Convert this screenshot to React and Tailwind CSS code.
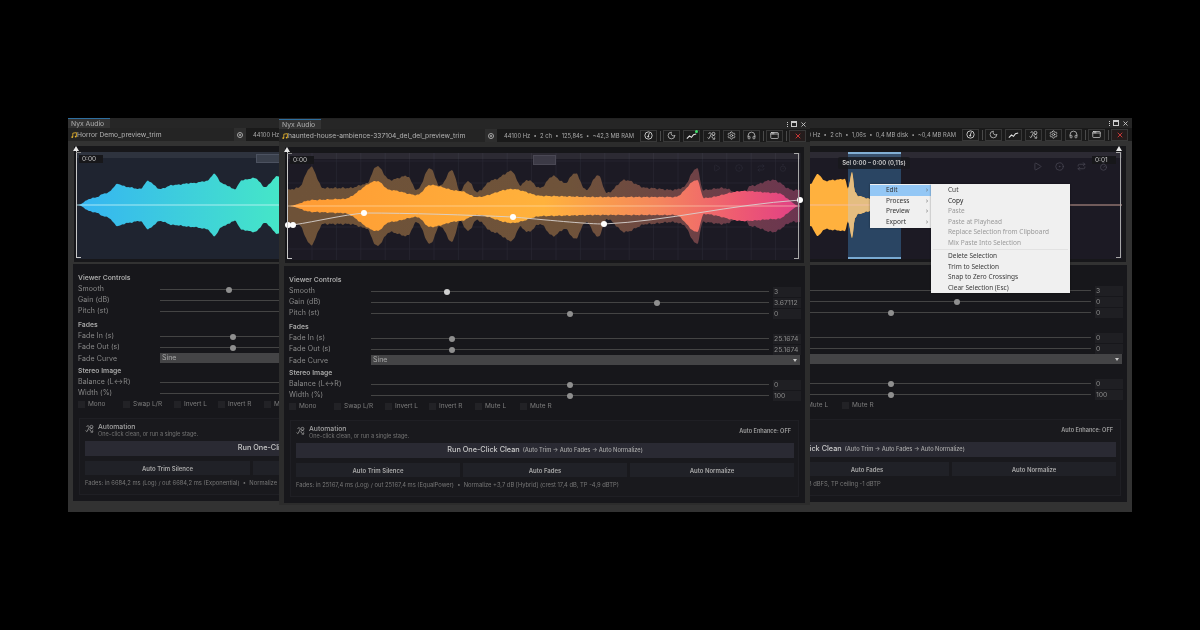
import React from "react";
import { Moon, Settings, Headphones, AppWindow, X, Play, CircleDot, Repeat, Timer } from "lucide-react";

const W = 512, H = 107, CY = 53;

function interp(pts, x) {
  if (x <= pts[0][0]) return pts[0][1];
  for (let i = 1; i < pts.length; i++) {
    if (x <= pts[i][0]) {
      const [a, b] = [pts[i - 1], pts[i]];
      const t = (x - a[0]) / (b[0] - a[0] || 1);
      const s = t * t * (3 - 2 * t);
      return a[1] + (b[1] - a[1]) * s;
    }
  }
  return pts[pts.length - 1][1];
}
function envPath(pts, jitter = 0.4) {
  const up = [], down = [];
  for (let x = 0; x <= W; x += 1) {
    let a = interp(pts, x);
    if (a > 3) a += (Math.sin(x * 0.83) + Math.sin(x * 1.61 + 1)) * jitter;
    up.push(`${x},${(CY - a).toFixed(1)}`);
    down.unshift(`${x},${(CY + a).toFixed(1)}`);
  }
  return `M${up.join("L")}L${down.join("L")}Z`;
}

const leftEnv = [[0,0],[16,7],[30,12],[41,21],[50,18],[63,16],[71,24],[83,16],[96,20],[116,22],[130,24],[137,31],[146,21],[158,16],[165,25],[178,27],[188,18],[201,29],[230,22],[300,26],[400,20],[512,0]];
const midOuter = [[0,16],[10,18],[23,39],[35,18],[62,18],[78,22],[89,40],[102,26],[119,30],[129,16],[142,38],[152,20],[164,36],[172,15],[180,25],[189,14],[205,26],[224,35],[232,21],[240,26],[252,18],[265,30],[277,23],[287,33],[298,16],[310,31],[319,13],[337,26],[359,18],[386,16],[394,18],[409,38],[415,16],[435,18],[455,11],[462,20],[485,26],[505,16],[512,16]];
const midInner = [[0,0],[25,6],[55,7],[89,25],[102,16],[129,11],[142,21],[172,15],[189,9],[224,17],[255,10],[310,9],[387,9],[409,26],[416,8],[455,15],[489,13],[512,0]];
const rightEnv = [[0,24],[200,21],[208,31],[215,24],[223,25],[235,26],[238,16],[242,33],[245,13],[248,9],[260,6],[290,2],[320,0],[512,0]];

function WaveLeft() {
  return (
    <svg viewBox={`0 0 ${W} ${H}`} className="w-full h-full block overflow-visible">
      <defs>
        <linearGradient id="lg" gradientUnits="userSpaceOnUse" x1="0" x2="202" y1="0" y2="0">
          <stop offset="0" stopColor="#35b4f2" />
          <stop offset="1" stopColor="#45e6c8" />
        </linearGradient>
      </defs>
      <path d={envPath(leftEnv, 0.3)} fill="url(#lg)" />
      <line x1="0" x2={W} y1={CY} y2={CY} stroke="#c8f4f6" strokeWidth="0.8" />
    </svg>
  );
}
function WaveMid() {
  const vs = [], hs = [];
  for (let x = 24; x < W; x += 24.4) vs.push(x);
  for (let y = 8; y < H; y += 22) hs.push(y);
  return (
    <svg viewBox={`0 0 ${W} ${H}`} className="w-full h-full block overflow-visible">
      <defs>
        <linearGradient id="mi" gradientUnits="userSpaceOnUse" x1="0" x2={W} y1="0" y2="0">
          <stop offset="0" stopColor="#ff9a33" />
          <stop offset="0.5" stopColor="#ffb23c" />
          <stop offset="0.72" stopColor="#f5875c" />
          <stop offset="0.88" stopColor="#ee5a72" />
          <stop offset="1" stopColor="#e03f86" />
        </linearGradient>
        <linearGradient id="mo" gradientUnits="userSpaceOnUse" x1="0" x2={W} y1="0" y2="0">
          <stop offset="0" stopColor="#6e5238" />
          <stop offset="0.55" stopColor="#6f533a" />
          <stop offset="0.8" stopColor="#6e4146" />
          <stop offset="1" stopColor="#6c3550" />
        </linearGradient>
      </defs>
      {vs.map((x) => <line key={x} x1={x} x2={x} y1="0" y2={H} stroke="#2a2834" strokeWidth="0.7" />)}
      {hs.map((y) => <line key={y} x1="0" x2={W} y1={y} y2={y} stroke="#2a2834" strokeWidth="0.7" />)}
      <path d={envPath(midOuter, 0.5)} fill="url(#mo)" />
      <path d={envPath(midInner, 0.3)} fill="url(#mi)" />
      <line x1="0" x2={W} y1={CY} y2={CY} stroke="#ffe9c8" strokeOpacity="0.75" strokeWidth="0.7" />
      <path d="M5 72 C30 68 55 62 76 60 C120 60 180 62 225 64 C270 68 300 71 316 71 C380 68 440 52 512 47" fill="none" stroke="#d8d2d0" strokeWidth="0.9" />
      {[[0,72],[5,72],[76,60],[225,64],[316,71],[512,47]].map(([x,y]) => (
        <circle key={x} cx={x} cy={y} r="3" fill="#fff" />
      ))}
    </svg>
  );
}
function WaveRight() {
  const d = envPath(rightEnv, 0.3);
  return (
    <svg viewBox={`0 0 ${W} ${H}`} className="w-full h-full block overflow-visible">
      <defs>
        <clipPath id="rs"><rect x="238" y="0" width="53" height={H} /></clipPath>
      </defs>
      <rect x="238" y="0" width="53" height={H} fill="#2a4563" />
      <path d={d} fill="#ffb13e" />
      <path d={d} fill="#e4bd80" clipPath="url(#rs)" />
      <rect x="238" y="0" width="53" height="2" fill="#79aad2" />
      <rect x="238" y={H - 2} width="53" height="2" fill="#79aad2" />
      <line x1="0" x2={W} y1={CY} y2={CY} stroke="#f4c0b0" strokeWidth="0.8" />
    </svg>
  );
}

function Note() {
  return (
    <svg viewBox="0 0 10 10" className="w-[6px] h-[6px] shrink-0">
      <path d="M3 2 L9 1 V7.5 M3 2 V8.5" fill="none" stroke="#e8b52e" strokeWidth="1.4" />
      <circle cx="2" cy="8.5" r="1.5" fill="#e8b52e" />
      <circle cx="7.8" cy="7.6" r="1.5" fill="#e8b52e" />
    </svg>
  );
}
function Squiggle({ cls }) {
  return (
    <svg viewBox="0 0 16 16" className={cls} fill="none" stroke="currentColor" strokeWidth="1.3">
      <path d="M3 5 a2.2 2.2 0 1 1 4 1.6 L4 13 a1.6 1.6 0 0 1 -2.6 -1.4" />
      <circle cx="11.5" cy="5" r="2.6" />
      <path d="M14 9.5 a2.6 2.6 0 1 0 -.3 2.4 V14 a2 2 0 0 1 -3.6 .8" />
    </svg>
  );
}
function Trend() {
  return (
    <svg viewBox="0 0 16 12" className="w-[11px] h-[8px]" fill="none" stroke="#e0e0e0" strokeWidth="1.6">
      <path d="M1 10 L5 6 L8 8 L11 4 L15 3" />
    </svg>
  );
}
function Dial() {
  return (
    <svg viewBox="0 0 16 16" className="w-[9px] h-[9px]" fill="none" stroke="#dcdcdc" strokeWidth="1.5">
      <circle cx="8" cy="8" r="6.5" />
      <path d="M9.5 3.5 L7.5 9.5" />
      <circle cx="7.5" cy="10" r="1" fill="#dcdcdc" />
    </svg>
  );
}

function Btn({ children, dot, red }) {
  return (
    <div className={`relative w-[17px] h-[12px] border border-[#383838] flex items-center justify-center shrink-0 ${red ? "bg-[#241c1c]" : "bg-[#1c1c1c]"}`}>
      {children}
      {dot && <div className="absolute -top-[1px] right-[1px] w-[3px] h-[3px] rounded-full bg-[#3fe06a]" />}
    </div>
  );
}
const Div = () => <div className="w-px h-[10px] bg-[#4a4a4a] -mx-[0.5px] shrink-0" />;

function Toolbar({ file, fileW, stats, dot, statsEnd }) {
  const ic = "w-[9px] h-[9px] text-[#dcdcdc]";
  return (
    <div className="h-[13px] bg-[#1a1a1a] flex items-center shrink-0 pr-[4px]">
      <div className="flex items-center h-full bg-[#242424] pl-[3px] shrink-0 overflow-hidden" style={{ width: fileW + 3 }}>
        <Note />
        <span className="text-[6.7px] pt-px text-[#b4b4b4] whitespace-nowrap">{file}</span>
      </div>
      <div className="w-[12px] h-[13px] bg-[#2e2e2e] flex items-center justify-center shrink-0">
        <div className="w-[6px] h-[6px] rounded-full border border-[#a8a8a8] flex items-center justify-center">
          <div className="w-[2px] h-[2px] rounded-full bg-[#a8a8a8]" />
        </div>
      </div>
      <div className={`flex-1 min-w-0 flex overflow-hidden ${statsEnd ? "justify-end pr-[6px]" : "pl-[7px]"}`}>
        <span className="text-[5.8px] pt-px text-[#a9a9a9] whitespace-pre">{stats}</span>
      </div>
      <div className="flex items-center gap-[3px] shrink-0">
        <Btn><Dial /></Btn>
        <Div />
        <Btn><Moon className={ic} strokeWidth={1.8} /></Btn>
        <Btn dot={dot}><Trend /></Btn>
        <Btn><Squiggle cls="w-[9px] h-[9px] text-[#dcdcdc]" /></Btn>
        <Btn><Settings className={ic} strokeWidth={1.8} /></Btn>
        <Btn><Headphones className={ic} strokeWidth={1.8} /></Btn>
        <Div />
        <Btn><AppWindow className={ic} strokeWidth={1.8} /></Btn>
        <Div />
        <Btn red><X className="w-[8px] h-[8px] text-[#e03a3a]" strokeWidth={2.6} /></Btn>
      </div>
    </div>
  );
}

function Slider({ label, pos, value, thumb = "bg-[#8f8f8f]" }) {
  return (
    <div className="h-[11px] flex items-center">
      <div className="w-[82px] shrink-0 text-[7px] tracking-[0.1px] text-[#8a8a8a] whitespace-nowrap">{label}</div>
      <div className="relative w-[398px] h-[1.5px] bg-[#444] shrink-0">
        {pos != null && (
          <div className={`absolute top-1/2 w-[6px] h-[6px] rounded-full -translate-x-1/2 -translate-y-1/2 ${thumb}`} style={{ left: `${pos}%` }} />
        )}
      </div>
      <div className="ml-[4px] w-[28px] h-[10px] bg-[#1f1f23] text-[6.8px] text-[#8a8a8a] leading-[10px] pl-[1px] shrink-0">{value}</div>
    </div>
  );
}
const Head = ({ children, cls = "" }) => (
  <div className={`h-[11px] flex items-center text-[6.8px] font-semibold text-[#a6a6a6] ${cls}`}>{children}</div>
);

const checks = [["Mono", 45], ["Swap L/R", 51], ["Invert L", 44], ["Invert R", 46], ["Mute L", 45], ["Mute R", 50]];

function Controls({ v, thumbWhite, status, up }) {
  return (
    <div className={`mx-[5px] h-[237px] bg-[#17171b] px-[5px] pt-[9px] shrink-0 ${up ? "mt-[2px]" : "mt-[3px]"}`}>
      <Head>Viewer Controls</Head>
      <Slider label="Smooth" pos={v.smooth} value="3" thumb={thumbWhite ? "bg-[#cfcfcf]" : undefined} />
      <Slider label="Gain (dB)" pos={v.gain} value={v.gainV} />
      <Slider label="Pitch (st)" pos={v.pitch} value="0" />
      <Head cls="mt-[3px]">Fades</Head>
      <Slider label="Fade In (s)" pos={v.fade} value={v.fadeV} />
      <Slider label="Fade Out (s)" pos={v.fade} value={v.fadeV} />
      <div className="h-[11px] flex items-start">
        <div className="w-[82px] shrink-0 text-[7px] leading-[11px] tracking-[0.1px] text-[#8a8a8a]">Fade Curve</div>
        <div className="flex-1 h-[10px] bg-[#444446] text-[7px] leading-[10px] text-[#a8a8a8] pl-[2px] flex justify-between items-center pr-[3px]">
          <span>Sine</span>
          <span className="w-0 h-0 border-x-[2.5px] border-x-transparent border-t-[3px] border-t-[#c8c8c8]" />
        </div>
      </div>
      <Head cls="mt-[2px]">Stereo Image</Head>
      <Slider label="Balance (L↔R)" pos={v.bal} value="0" />
      <Slider label="Width (%)" pos={v.bal} value="100" />
      <div className="h-[11px] flex items-center">
        {checks.map(([t, w]) => (
          <div key={t} className="flex items-center gap-[3px] shrink-0" style={{ width: w }}>
            <div className="w-[7px] h-[7px] bg-[#222226]" />
            <span className="text-[6.5px] text-[#7d7d7d] whitespace-nowrap">{t}</span>
          </div>
        ))}
      </div>
      <div className="mt-[8px] ml-[1px] mr-[1px] h-[77px] bg-[#19191d] border border-[#1f1f24] pl-[5px] pr-[4px]">
        <div className="h-[22px] flex items-start pt-[4px]">
          <Squiggle cls="w-[9px] h-[9px] text-[#a8a8a8] mr-[4px] mt-[1px]" />
          <div className="flex flex-col">
            <span className="text-[6.8px] leading-[8px] text-[#a5a5a5] font-medium">Automation</span>
            <span className="text-[5.6px] leading-[7px] text-[#747474]">One-click clean, or run a single stage.</span>
          </div>
          <span className="ml-auto mr-[3px] mt-[2px] text-[5.6px] font-semibold text-[#a0a0a0]">Auto Enhance: OFF</span>
        </div>
        <div className="h-[15px] bg-[#2a2a33] flex items-center justify-center gap-[3px]">
          <span className="text-[7.3px] font-medium text-[#c8c8c8]">Run One-Click Clean</span>
          <span className="text-[5.7px] font-medium text-[#a8a8a8]">(Auto Trim → Auto Fades → Auto Normalize)</span>
        </div>
        <div className="mt-[5px] h-[14px] grid grid-cols-3 gap-[3px]">
          {["Auto Trim Silence", "Auto Fades", "Auto Normalize"].map((t) => (
            <div key={t} className="bg-[#202127] flex items-center justify-center text-[6px] font-semibold text-[#a8a8a8]">{t}</div>
          ))}
        </div>
        <div className="mt-[4px] h-[8px] text-[5.8px] leading-[8px] text-[#777] whitespace-pre overflow-hidden">{status}</div>
      </div>
    </div>
  );
}

function Brackets({ left, right }) {
  return (
    <>
      {left && (
        <>
          <div className="absolute -left-[1px] -top-[3px] bottom-[1px] w-[1px] bg-[#c8c8c8]" />
          <div className="absolute -left-[1px] bottom-[1px] w-[5px] h-px bg-[#c8c8c8]" />
          <div className="absolute -left-[1px] top-0 w-[5px] h-px bg-[#8a8a8a]" />
          <div className="absolute -left-[4px] -top-[6px] w-0 h-0 border-x-[3px] border-x-transparent border-b-[5px] border-b-[#e8e8e8]" />
        </>
      )}
      {right && (
        <>
          <div className="absolute right-[1px] top-0 bottom-[1px] w-[1px] bg-[#a8a8a8]" />
          <div className="absolute right-[1px] bottom-[1px] w-[5px] h-px bg-[#a8a8a8]" />
          <div className="absolute right-[1px] top-0 w-[5px] h-px bg-[#a8a8a8]" />
        </>
      )}
    </>
  );
}

function Win({ cls, h, file, fileW, stats, dot, statsEnd, bg, wave, overlay, ctrl, thumbWhite, status, up }) {
  return (
    <div className={`absolute flex flex-col overflow-hidden ${cls}`} style={{ height: h }}>
      <div className="h-[10px] bg-[#262626] flex items-stretch shrink-0">
        <div className="w-[42px] bg-[#333] border-t border-t-[#2f6f9f] text-[6.8px] leading-[9px] pl-[3px] text-[#b0b0b0]">Nyx Audio</div>
        <div className="ml-auto flex items-center gap-[3px] pr-[3px]">
          <div className="flex flex-col gap-[1px]">
            <div className="w-[1px] h-[1px] bg-[#ccc]" /><div className="w-[1px] h-[1px] bg-[#ccc]" /><div className="w-[1px] h-[1px] bg-[#ccc]" />
          </div>
          <div className="w-[6px] h-[6px] border border-[#ccc] border-t-2" />
          <X className="w-[7px] h-[7px] text-[#ccc]" strokeWidth={3} />
        </div>
      </div>
      <Toolbar file={file} fileW={fileW} stats={stats} dot={dot} statsEnd={statsEnd} />
      <div className="mt-[5px] ml-[6px] mr-[6px] h-[116px] bg-[#17171a] pt-[6px] pl-[3px] shrink-0">
        <div className={`relative w-[512px] h-[107px] ${bg}`}>
          <div className="absolute top-0 left-0 right-0 h-[6px] bg-[#ffffff12]" />
          {wave}
          {overlay}
        </div>
      </div>
      <Controls v={ctrl} thumbWhite={thumbWhite} status={status} up={up} />
    </div>
  );
}

const Chip = ({ t, cls }) => (
  <div className={`absolute top-[3px] h-[8px] w-[24px] bg-[#17171a] text-[6.5px] leading-[8px] text-[#c4c4c4] pl-[3px] ${cls}`}>{t}</div>
);

function Menu() {
  const Row = ({ t, dim, dark }) => (
    <div className={`h-[10.5px] leading-[10.5px] pl-[17px] whitespace-nowrap ${dim ? "text-[#9a9a9a]" : dark ? "text-[#222]" : "text-[#3a3a3a]"}`}>{t}</div>
  );
  const Main = ({ t, on }) => (
    <div className={`h-[10.5px] leading-[10.5px] pl-[16px] pr-[3px] flex justify-between text-[#333] ${on ? "bg-[#93c7f5]" : ""}`}>
      <span>{t}</span><span className="text-[#666]">›</span>
    </div>
  );
  return (
    <div className="absolute left-[870px] top-[184px] z-30 flex items-start font-['Noto_Sans',sans-serif] text-[6.5px]">
      <div className="w-[61px] bg-[#f0f0f0] py-[1px] shadow-[0_0_2px_#0006]">
        <Main t="Edit" on /><Main t="Process" /><Main t="Preview" /><Main t="Export" />
      </div>
      <div className="w-[139px] h-[109px] bg-[#f0f0f0] pt-[1px] shadow-[0_0_2px_#0006]">
        <Row t="Cut" /><Row t="Copy" dark /><Row t="Paste" dim /><Row t="Paste at Playhead" dim />
        <Row t="Replace Selection from Clipboard" dim /><Row t="Mix Paste Into Selection" dim />
        <div className="h-px bg-[#e2e2e2] my-[1px] mx-[2px]" />
        <Row t="Delete Selection" /><Row t="Trim to Selection" /><Row t="Snap to Zero Crossings" /><Row t="Clear Selection (Esc)" />
      </div>
    </div>
  );
}

export default function App() {
  const ovLeft = (
    <>
      <Brackets left />
      <Chip t="0:00" cls="left-[2px]" />
      <div className="absolute left-[179px] top-[2px] w-[24px] h-[9px] border border-[#4c5260] bg-[#3a404c]" />
    </>
  );
  const ovMid = (
    <>
      <Brackets left right />
      <Chip t="0:00" cls="left-[2px]" />
      <div className="absolute left-[245px] top-[2px] w-[23px] h-[10px] border border-[#4a4854] bg-[#3c3a46]" />
      <div className="absolute right-[13px] top-[11px] flex gap-[14px] text-[#2c2a36]">
        <Play className="w-[8px] h-[8px]" /><CircleDot className="w-[8px] h-[8px]" /><Repeat className="w-[8px] h-[8px]" /><Timer className="w-[8px] h-[8px]" />
      </div>
    </>
  );
  const ovRight = (
    <>
      <div className="absolute right-[0px] -top-[6px] w-0 h-0 border-x-[3px] border-x-transparent border-b-[5px] border-b-[#e8e8e8]" />
      <Brackets right />
      <div className="absolute left-[228px] top-[5px] h-[12px] w-[72px] rounded-[2px] bg-[#18181ccc] text-[6px] font-semibold leading-[12px] text-center text-[#c8c8c8] whitespace-nowrap">Sel 0:00 – 0:00 (0,11s)</div>
      <Chip t="0:01" cls="right-[6px] !top-[4px]" />
      <div className="absolute right-[14px] top-[10px] flex gap-[13px] text-[#4a4854]">
        <Play className="w-[9px] h-[9px]" /><CircleDot className="w-[9px] h-[9px]" /><Repeat className="w-[9px] h-[9px]" /><Timer className="w-[9px] h-[9px]" />
      </div>
    </>
  );
  return (
    <div className="relative w-[1200px] h-[630px] bg-black overflow-hidden font-['Inter',sans-serif] blur-[0.4px]">
      <Win
        cls="left-[68px] top-[118px] w-[534px] bg-[#323232] z-0"
        h={394}
        up
        file="Horror Demo_preview_trim"
        fileW={163}
        stats="44100 Hz  •  2 ch  •  33,42s  •  ~11,2 MB RAM"
        bg="bg-[#1f2430]"
        wave={<WaveLeft />}
        overlay={ovLeft}
        ctrl={{ smooth: 17.3, gain: 50, gainV: "0", pitch: 50, fade: 18.3, fadeV: "6.6842", bal: 50 }}
        status="Fades: in 6684,2 ms (Log) / out 6684,2 ms (Exponential)  •  Normalize +2,1 dB [Hybrid]"
      />
      <Win
        cls="left-[601px] top-[118px] w-[531px] bg-[#323232] z-0"
        h={394}
        file="Horror Demo_preview_trim"
        fileW={100}
        statsEnd
        stats="44100 Hz  •  2 ch  •  1,06s  •  0,4 MB disk  •  ~0,4 MB RAM"
        bg="bg-[#1c1a24]"
        wave={<WaveRight />}
        overlay={ovRight}
        ctrl={{ smooth: 20, gain: 66.3, gainV: "0", pitch: 49.8, fade: null, fadeV: "0", bal: 49.8 }}
        status="Fades: in 530,0 ms (Linear) / out 530,0 ms (Linear)  •  Normalize to -18 dBFS, TP ceiling -1 dBTP"
      />
      <Win
        cls="left-[279px] top-[118px] w-[531px] bg-[#2c2c2c] border-t border-t-[#222] z-10"
        h={387}
        file="haunted-house-ambience-337104_del_del_preview_trim"
        fileW={203}
        stats="44100 Hz  •  2 ch  •  125,84s  •  ~42,3 MB RAM"
        dot
        bg="bg-[#1c1a24]"
        wave={<WaveMid />}
        overlay={ovMid}
        thumbWhite
        ctrl={{ smooth: 19, gain: 71.8, gainV: "3.67112", pitch: 50, fade: 20.3, fadeV: "25.1674", bal: 50 }}
        status="Fades: in 25167,4 ms (Log) / out 25167,4 ms (EqualPower)  •  Normalize +3,7 dB [Hybrid] (crest 17,4 dB, TP -4,9 dBTP)"
      />
      <Menu />
    </div>
  );
}
